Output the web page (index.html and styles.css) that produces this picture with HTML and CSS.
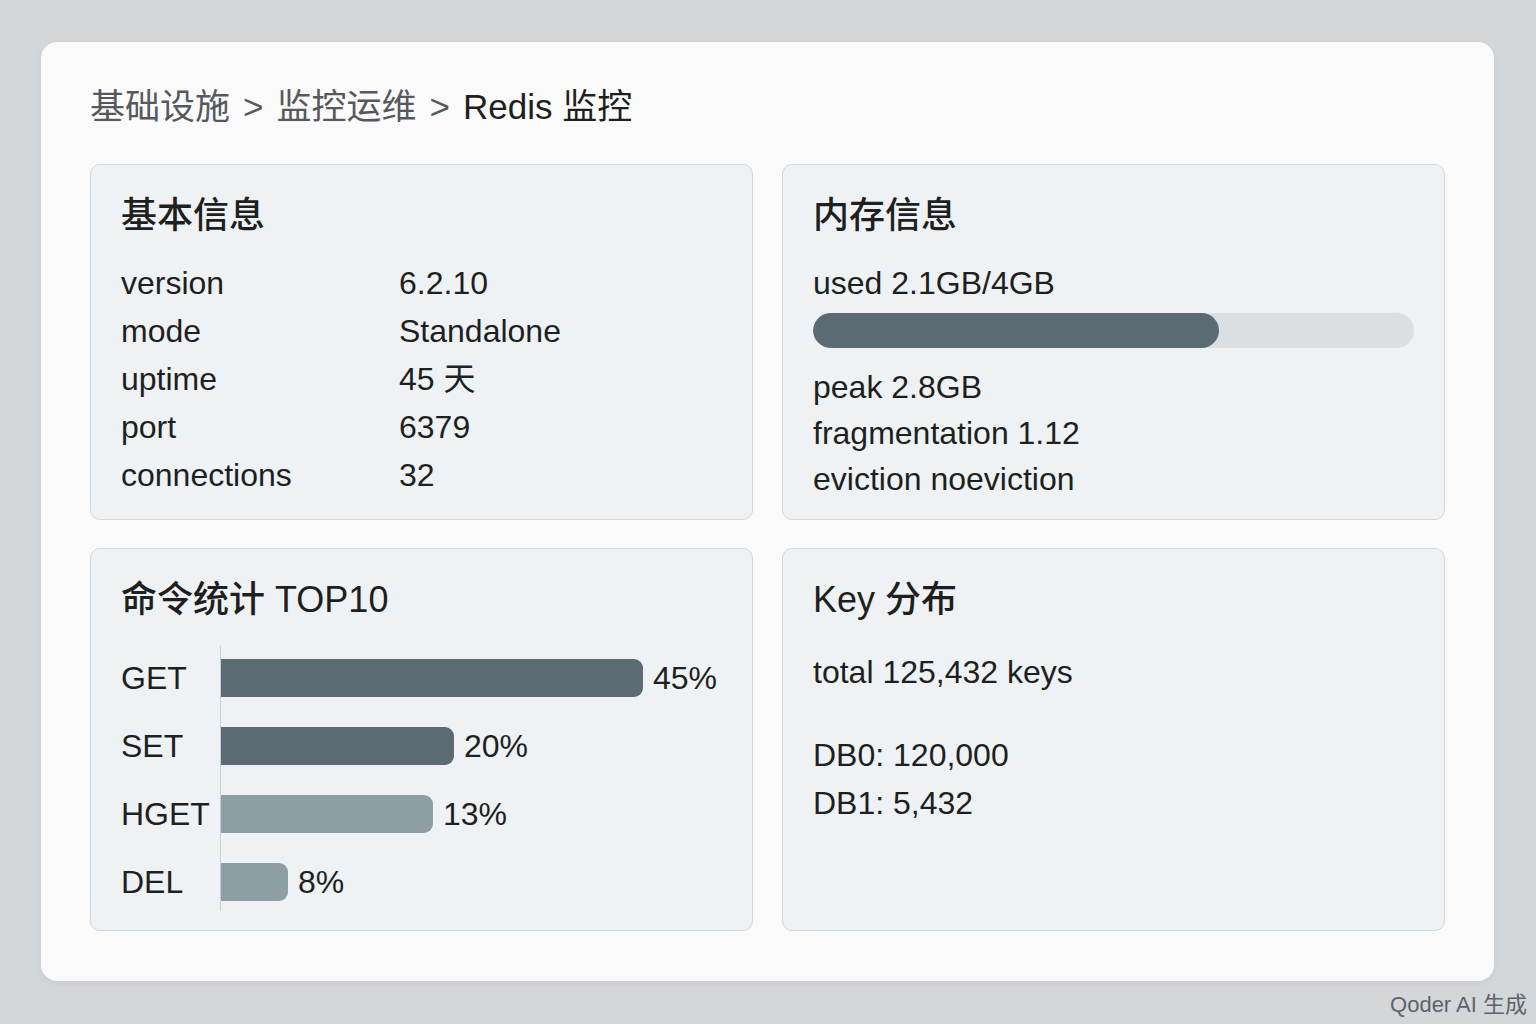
FILE: index.html
```html
<!DOCTYPE html>
<html lang="zh-CN">
<head>
    <meta charset="UTF-8">
    <meta name="viewport" content="width=device-width, initial-scale=1.0">
    <title>Redis 监控</title>
    <link rel="stylesheet" href="styles.css">
</head>
<body>
    <main class="panel">
        <nav class="crumbs">
            <span>基础设施</span>
            <span class="sep">&gt;</span>
            <span>监控运维</span>
            <span class="sep">&gt;</span>
            <span class="current">Redis 监控</span>
        </nav>

        <section class="grid">
            <div class="card">
                <h2>基本信息</h2>
                <dl class="info">
                    <dt>version</dt><dd>6.2.10</dd>
                    <dt>mode</dt><dd>Standalone</dd>
                    <dt>uptime</dt><dd>45 天</dd>
                    <dt>port</dt><dd>6379</dd>
                    <dt>connections</dt><dd>32</dd>
                </dl>
            </div>

            <div class="card">
                <h2>内存信息</h2>
                <div class="line">used 2.1GB/4GB</div>
                <div class="meter"><div class="meter-fill" style="width: 67.5%"></div></div>
                <div class="mem-list">
                    <div>peak 2.8GB</div>
                    <div>fragmentation 1.12</div>
                    <div>eviction noeviction</div>
                </div>
            </div>

            <div class="card">
                <h2>命令统计 TOP10</h2>
                <div class="chart">
                    <div class="bar-row">
                        <span class="bar-label">GET</span>
                        <span class="bar dark" style="width: 422px"></span>
                        <span class="bar-pct">45%</span>
                    </div>
                    <div class="bar-row">
                        <span class="bar-label">SET</span>
                        <span class="bar dark" style="width: 233px"></span>
                        <span class="bar-pct">20%</span>
                    </div>
                    <div class="bar-row">
                        <span class="bar-label">HGET</span>
                        <span class="bar light" style="width: 212px"></span>
                        <span class="bar-pct">13%</span>
                    </div>
                    <div class="bar-row">
                        <span class="bar-label">DEL</span>
                        <span class="bar light" style="width: 67px"></span>
                        <span class="bar-pct">8%</span>
                    </div>
                </div>
            </div>

            <div class="card">
                <h2>Key 分布</h2>
                <div class="line total">total 125,432 keys</div>
                <div class="db-list">
                    <div>DB0: 120,000</div>
                    <div>DB1: 5,432</div>
                </div>
            </div>
        </section>
    </main>

    <div class="watermark">Qoder AI 生成</div>
</body>
</html>
```

FILE: styles.css
```css
html, body {
    height: 100%;
}

body {
    margin: 0;
    padding: 42px 42px 0 41px;
    box-sizing: border-box;
    background-color: #d4d7da;
    font-family: "Liberation Sans", Arial, "Noto Sans CJK SC", sans-serif;
    color: #1e1f20;
    overflow: hidden;
}

.panel {
    width: 1453px;
    height: 939px;
    box-sizing: border-box;
    padding: 43px 49px 0 49px;
    background: #fafafa;
    border-radius: 16px;
    box-shadow: 0 2px 6px rgba(0, 0, 0, 0.06);
}

.crumbs {
    font-size: 35px;
    line-height: 44px;
    color: #55595d;
    display: flex;
    gap: 13px;
}

.crumbs .current {
    color: #1e1f20;
}

.grid {
    margin-top: 35px;
    display: grid;
    grid-template-columns: 663px 663px;
    grid-template-rows: 356px 383px;
    column-gap: 29px;
    row-gap: 28px;
}

.card {
    box-sizing: border-box;
    padding: 29px 30px 20px 30px;
    background: #eff2f4;
    border: 1.5px solid #d3d7da;
    border-radius: 10px;
}

.card h2 {
    margin: 0;
    font-size: 36px;
    line-height: 44px;
    font-weight: 500;
}

.info {
    margin: 21px 0 0 0;
    display: grid;
    grid-template-columns: 278px 1fr;
    font-size: 32px;
    line-height: 48px;
}

.info dt, .info dd {
    margin: 0;
}

.line {
    margin-top: 21px;
    font-size: 32px;
    line-height: 48px;
}

.meter {
    margin-top: 6px;
    height: 35px;
    background: #dcdfe1;
    border-radius: 18px;
    overflow: hidden;
}

.meter-fill {
    height: 100%;
    background: #5c6b73;
    border-radius: 18px;
}

.mem-list {
    margin-top: 16px;
    font-size: 32px;
    line-height: 46px;
}

.chart {
    margin-top: 24px;
    padding: 13px 0 10px 0;
    display: flex;
    flex-direction: column;
    gap: 30px;
    background: linear-gradient(#c9ced1, #c9ced1) 99px 0 / 1px 100% no-repeat;
}

.bar-row {
    display: flex;
    align-items: center;
    height: 38px;
    font-size: 32px;
}

.bar-label {
    width: 100px;
    flex-shrink: 0;
}

.bar {
    height: 38px;
    border-radius: 0 9px 9px 0;
}

.bar.dark {
    background: #5c6b73;
}

.bar.light {
    background: #8e9ea5;
}

.bar-pct {
    margin-left: 10px;
}

.total {
    margin-top: 26px;
}

.db-list {
    margin-top: 35px;
    font-size: 32px;
    line-height: 48px;
}

.watermark {
    position: absolute;
    right: 9px;
    bottom: 6px;
    font-size: 22px;
    color: #5f6367;
}
```
